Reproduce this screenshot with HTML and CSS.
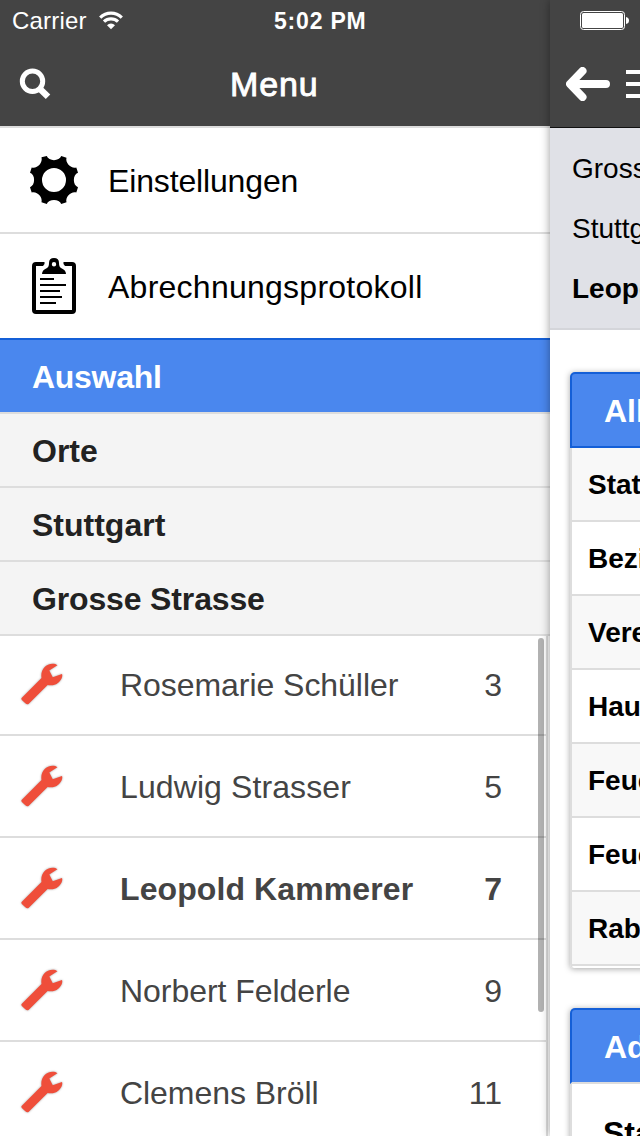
FILE: index.html
```html
<!DOCTYPE html>
<html lang="de">
<head>
<meta charset="utf-8">
<title>Menu</title>
<link rel="stylesheet" href="styles.css">
</head>
<body>
<svg class="defs" width="0" height="0">
  <symbol id="wrench" viewBox="0 0 42 42">
    <path d="M1.8 34.8 L21 15.6 C19.6 7 26 .2 34.500 2 L36.600 3.200 L28.600 8.200 L32 15 L41 11.600 C42.400 15 38.600 20.500 34.500 22 C31.500 23 29 23 27 22.400 L8.600 40.800 Q7 42 5.200 40.400 L1.800 37.200 Q.8 36 1.800 34.800Z"/>
  </symbol>
</svg>
<div class="app">
  <section class="menu">
    <header class="bar">
      <div class="status">
        <span class="carrier">Carrier</span>
        <svg class="wifi" width="24" height="19" viewBox="0 0 24 19" fill="none" stroke="#fff" stroke-width="3.2">
          <path d="M1.2 6.6 A15.5 15.5 0 0 1 22.8 6.6"/>
          <path d="M5 10.7 A10 10 0 0 1 19 10.7"/>
          <path d="M12 18.3 L8 14.2 A5.8 5.8 0 0 1 16 14.2Z" fill="#fff" stroke="none"/>
        </svg>
        <span class="time">5:02 PM</span>
      </div>
      <div class="titlebar">
        <svg class="search" width="32" height="32" viewBox="0 0 32 32" fill="none" stroke="#fff">
          <circle cx="13.500" cy="13.300" r="10.200" stroke-width="5"/>
          <path d="M20 20 L29 28.800" stroke-width="6.400"/>
        </svg>
        <h1>Menu</h1>
      </div>
    </header>
    <div class="link">
      <svg class="icon" width="48" height="48" viewBox="0 0 48 48">
        <path fill-rule="evenodd" d="M11.5 1.200 L16.800 0 C18.500 5.500 29.500 5.500 31.200 0 L36.500 1.700 C35 6.500 41 13 46.300 11.500 L48 16.800 C42.500 18.500 42.500 29.500 48 31.200 L46.300 36.500 C41 35 35 41 36.500 46.300 L31.200 48 C29.500 42.500 18.500 42.500 16.800 48 L11.500 46.300 C13 41 7 35 1.700 36.500 L0 31.200 C5.500 29.500 5.500 18.500 0 16.800 L1.700 11.500 C7 13 13 7 11.500 1.200Z M24 12 A12 12 0 1 0 24 36 A12 12 0 1 0 24 12Z"/>
      </svg>
      <span>Einstellungen</span>
    </div>
    <div class="link last">
      <svg class="icon clip" width="44" height="56" viewBox="0 0 44 56">
        <path d="M0 8 Q0 4 4 4 H12.500 V6 L11 8 H4 V52 H40 V8 H33 L31.500 6 V4 H40 Q44 4 44 8 V52 Q44 56 40 56 H4 Q0 56 0 52Z"/>
        <path fill-rule="evenodd" d="M10 16 Q10 12 15 10 Q17 9 17 5 Q17 0 22 0 Q27 0 27 5 Q27 9 29 10 Q34 12 34 16Z M22 4 A2.200 2.200 0 1 0 22 8.400 A2.200 2.200 0 1 0 22 4Z"/>
        <path d="M8 21H22M8 27H34M8 33H28M8 39H30M8 45H24" stroke="#000" stroke-width="2"/>
      </svg>
      <span class="protokoll">Abrechnungsprotokoll</span>
    </div>
    <div class="group active">Auswahl</div>
    <div class="group">Orte</div>
    <div class="group">Stuttgart</div>
    <div class="group grosse">Grosse Strasse</div>
    <div class="people">
      <div class="person"><svg class="wrench"><use href="#wrench"/></svg><span class="name">Rosemarie Schüller</span><span>3</span></div>
      <div class="person"><svg class="wrench"><use href="#wrench"/></svg><span class="name wide">Ludwig Strasser</span><span>5</span></div>
      <div class="person current"><svg class="wrench"><use href="#wrench"/></svg><span class="name wide">Leopold Kammerer</span><span>7</span></div>
      <div class="person"><svg class="wrench"><use href="#wrench"/></svg><span class="name">Norbert Felderle</span><span>9</span></div>
      <div class="person"><svg class="wrench"><use href="#wrench"/></svg><span class="name">Clemens Bröll</span><span>11</span></div>
      <div class="scrollbar"></div>
    </div>
  </section>
  <section class="detail">
    <header class="bar">
      <svg class="battery" width="50" height="20" viewBox="0 0 50 20">
        <rect x=".5" y=".5" width="44" height="18" rx="3" fill="none" stroke="#fff"/>
        <rect x="2" y="2" width="41" height="15" rx="1.500" fill="#fff"/>
        <path d="M46 6 Q49 6.500 49 9.500 Q49 12.500 46 13Z" fill="#fff"/>
      </svg>
      <div class="tools">
        <svg width="44" height="34" viewBox="0 0 44 34" fill="none" stroke="#fff" stroke-width="8" stroke-linecap="round" stroke-linejoin="round">
          <path d="M16.500 4 L4 17 L16.500 30 M6 17 H40"/>
        </svg>
        <svg class="lines" width="32" height="28" viewBox="0 0 32 28" fill="#fff">
          <path d="M0 0H32V4H0ZM0 12H32V16H0ZM0 24H32V28H0Z"/>
        </svg>
      </div>
    </header>
    <div class="address">
      <div>Grosse Strasse</div>
      <div>Stuttgart</div>
      <div class="who">Leopold Kammerer</div>
    </div>
    <div class="card">
      <h2>Allgemein</h2>
      <div class="field">Status</div>
      <div class="field">Bezirk</div>
      <div class="field">Verein</div>
      <div class="field">Haus</div>
      <div class="field">Feuer</div>
      <div class="field">Feuer</div>
      <div class="field">Rabatt</div>
    </div>
    <div class="card open">
      <h2>Adresse</h2>
      <div class="field large">Stadt</div>
    </div>
  </section>
</div>
</body>
</html>
```
FILE: styles.css
```css
* { box-sizing: border-box; }
body { margin: 0; width: 640px; height: 1136px; overflow: hidden; background: #fff; color: #000; font-family: "Liberation Sans", Arial, sans-serif; }
h1, h2 { margin: 0; }
svg { display: block; flex: none; }
.defs { position: absolute; }
.app { display: flex; width: 640px; height: 1136px; overflow: hidden; }
.menu { flex: none; width: 550px; height: 1136px; overflow: hidden; }
.menu .bar { height: 128px; background: #444; border-bottom: 2px solid #ddd; color: #fff; }
.status { display: flex; align-items: center; height: 42px; padding-left: 12px; font-size: 24px; line-height: 28px; }
.carrier { width: 87px; letter-spacing: .2px; }
.wifi { margin-top: -2px; }
.time { width: 94px; margin-left: 151px; white-space: nowrap; font-size: 23px; font-weight: 700; letter-spacing: .8px; }
.titlebar { display: flex; align-items: center; height: 84px; }
.search { margin-left: 19px; }
h1 { width: 90px; margin-left: 179px; font-size: 34px; line-height: 40px; font-weight: 400; letter-spacing: .9px; -webkit-text-stroke: .9px #fff; }
.link { display: flex; align-items: center; height: 106px; border-bottom: 2px solid #ddd; font-size: 32px; line-height: 38px; white-space: nowrap; letter-spacing: -.15px; }
.link span { padding-top: 2px; }
.link.last { height: 104px; border: 0; }
.icon { margin: 0 30px; }
.icon.clip { margin: 0 32px; }
.link .protokoll { letter-spacing: .25px; }
.group { height: 74px; padding: 1px 32px 0; border-bottom: 2px solid #ddd; background: #f4f4f4; color: #222; font-size: 32px; line-height: 72px; font-weight: 700; }
.active { height: 76px; background: #4a87ee; border-top: 2px solid #145fd7; color: #fff; letter-spacing: -.3px; }
.grosse { letter-spacing: -.15px; }
.people { position: relative; width: 548px; height: 500px; overflow: hidden; border-right: 2px solid #ddd; color: #444; font-size: 32px; line-height: 36px; }
.person { display: flex; align-items: center; height: 102px; padding: 2px 44px 0 20px; border-bottom: 2px solid #ddd; }
.person:first-child { height: 100px; padding-top: 0; }
.current { font-weight: 700; }
.wrench { width: 43px; height: 43px; margin-top: -4px; fill: #ef4e3a; filter: drop-shadow(0 0 1px rgba(0,0,0,.35)); }
.name { flex: 1; margin-left: 57px; white-space: nowrap; letter-spacing: -.05px; }
.wide { letter-spacing: .1px; }
.scrollbar { position: absolute; top: 2px; right: 2px; width: 6px; height: 374px; border-radius: 3px; background: rgba(0,0,0,.3); }
.detail { position: relative; flex: none; width: 320px; height: 1136px; background: #fff; box-shadow: 0 0 9px rgba(0,0,0,.4); }
.detail .bar { height: 128px; padding: 11px 0 0 16px; background: #444; border-bottom: 1px solid #111; }
.battery { margin-left: 14px; }
.tools { display: flex; gap: 16px; align-items: center; height: 34px; margin-top: 36px; }
.address { height: 202px; padding: 11px 22px 0; border-bottom: 2px solid #d4d5da; background: #e0e1e7; font-size: 28px; line-height: 60px; }
.who { font-weight: 700; }
.card { height: 596px; margin: 42px 20px 40px; border-left: 2px solid #ddd; border-radius: 4px; box-shadow: 0 1px 6px rgba(0,0,0,.35); }
.card h2 { height: 76px; margin-left: -2px; padding: 1px 32px 0; background: #4a87ee; border: 2px solid #145fd7; border-radius: 5px 5px 0 0; color: #fff; font-size: 32px; line-height: 72px; }
.card.open { margin-top: -2px; }
.card:not(.open) { margin-bottom: 42px; }
.field { height: 74px; padding-left: 16px; border-bottom: 2px solid #ddd; background: #fff; font-size: 28px; line-height: 74px; font-weight: 700; }
.field:nth-child(even) { background: #f8f8f8; }
.open h2 { border-bottom-color: #ddd; }
.open .field.large { height: 104px; padding-left: 31px; background: #fff; font-size: 32px; line-height: 98px; }
```
